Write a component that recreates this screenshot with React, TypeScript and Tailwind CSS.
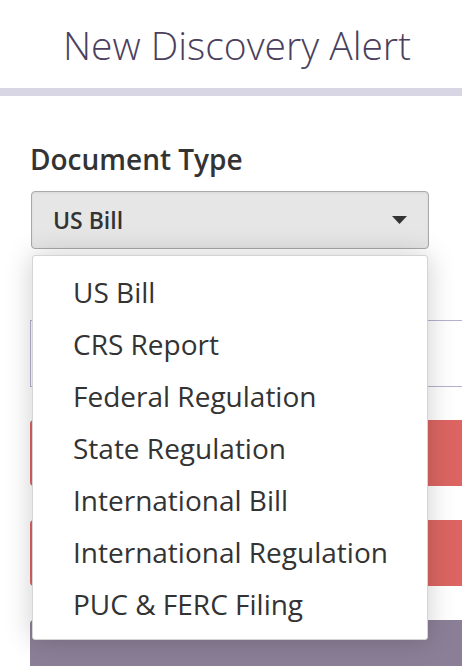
const options = [
  "US Bill",
  "CRS Report",
  "Federal Regulation",
  "State Regulation",
  "International Bill",
  "International Regulation",
  "PUC & FERC Filing",
];

const App = () => {
  return (
    <div
      className="relative w-[462px] h-[666px] overflow-hidden bg-white"
      style={{ fontFamily: '"Open Sans", "Liberation Sans", sans-serif' }}
    >
      {/* header */}
      <div className="h-[88px] pt-[25px] pl-[12px] text-center">
        <h1 className="text-[39px] leading-none font-light text-[#4c3f5e]">New Discovery Alert</h1>
      </div>
      <div className="h-[8px] bg-[#d8d6e4]" />

      {/* form */}
      <div className="flex flex-col pl-[30px] pt-[49px]">
        <label className="text-[28px] leading-none font-semibold text-[#333]">Document Type</label>
        <div className="mt-[18px] ml-px flex h-[58px] w-[398px] items-center justify-between rounded-[4px] border border-[#a9a9a9] bg-[#e6e6e6] pl-[21px] pr-[21px] shadow-[inset_0_1px_3px_rgba(0,0,0,0.06)]">
          <span className="text-[23px] font-semibold text-[#333]">US Bill</span>
          <svg width="15" height="8" viewBox="0 0 15 8">
            <path d="M0 0 H15 L7.5 8 Z" fill="#333" />
          </svg>
        </div>

        <div className="mt-[71px] h-[67px] w-[460px] border border-r-0 border-[#b5b1cc] bg-white" />
        <div className="mt-[33px] h-[66px] w-[460px] rounded-l-[4px] bg-[#dc6562]" />
        <div className="mt-[34px] h-[66px] w-[460px] rounded-l-[4px] bg-[#dc6562]" />
        <div className="mt-[34px] h-[60px] w-[460px] rounded-l-[4px] bg-[#8b7f97]" />
      </div>

      {/* open dropdown menu */}
      <ul className="absolute left-[32px] top-[255px] w-[396px] h-[385px] rounded-[3px] border border-[#d4d4d4] bg-white pt-[10px] pl-[40px] shadow-[0_0_28px_rgba(0,0,0,0.2)]">
        {options.map((opt) => (
          <li key={opt} className="text-[28px] leading-[52px] text-[#333]">
            {opt}
          </li>
        ))}
      </ul>
    </div>
  );
};

export default App;
